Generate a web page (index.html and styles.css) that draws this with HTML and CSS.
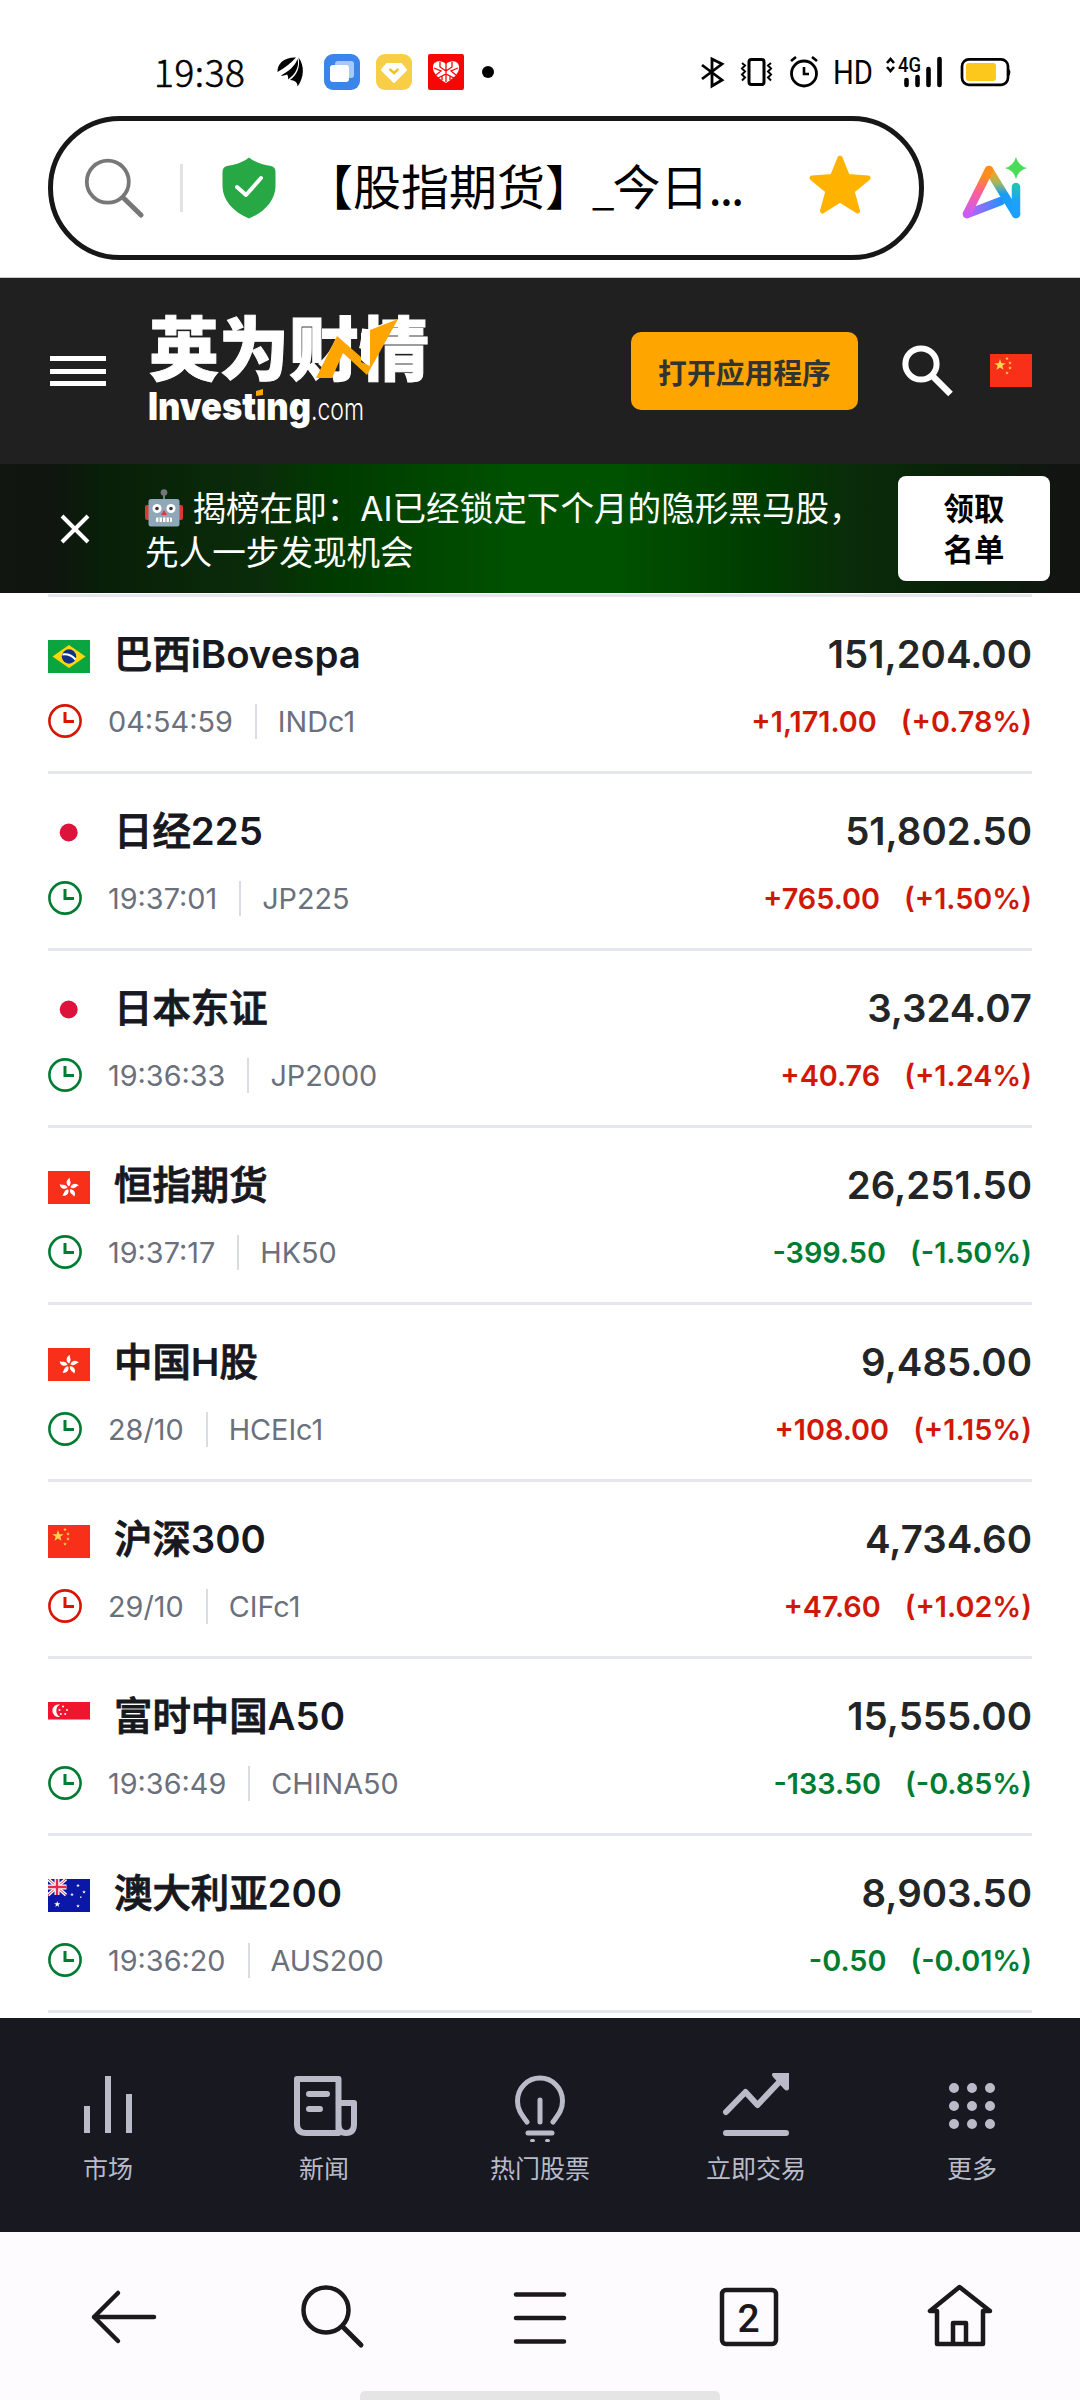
FILE: index.html
```
<!DOCTYPE html>
<html lang="zh-CN">
	<head>
		<meta charset="utf-8">
		<title>股指期货</title>
		<link rel="stylesheet" href="styles.css">
	</head>
	<body>
		<!-- shared shapes -->
		<svg class="defs" width="0" height="0">
			<symbol id="clock" viewBox="0 0 34 34">
				<circle cx="17" cy="17" r="15.6" fill="none" stroke="currentColor" stroke-width="2.6"/>
				<path d="M17 8v9.5h9" fill="none" stroke="currentColor" stroke-width="3"/>
			</symbol>
			<symbol id="star" viewBox="-10 -10 20 20">
				<path d="M0-10 2.4-3.1 9.5-3.1 3.8 1.2 5.9 8.1 0 4-5.9 8.1-3.8 1.2-9.5-3.1-2.4-3.1z" fill="currentColor"/>
			</symbol>
			<symbol id="flag-cn" viewBox="0 0 42 33">
				<path d="M0 0h42v33H0z" fill="#f93019"/>
				<g color="#ffd850">
					<use href="#star" x="4" y="5" width="12" height="12"/>
					<use href="#star" x="15" y="2.500" width="4" height="4"/>
					<use href="#star" x="18" y="7" width="4" height="4"/>
					<use href="#star" x="18" y="12" width="4" height="4"/>
					<use href="#star" x="15" y="17" width="4" height="4"/>
				</g>
			</symbol>
			<symbol id="flag-br" viewBox="0 0 42 33">
				<path d="M0 0h42v33H0z" fill="#0ba540"/>
				<path d="M21 5 37.500 16.500 21 28 4.500 16.500z" fill="#fbd80b"/>
				<circle cx="21" cy="16.500" r="7.200" fill="#10308c"/>
				<path d="M14.500 14.500Q22 13.500 27.500 19.500" fill="none" stroke="#fff" stroke-width="2"/>
			</symbol>
			<symbol id="flag-jp" viewBox="0 0 42 33">
				<circle cx="20.700" cy="15.500" r="9" fill="#dc143c"/>
			</symbol>
			<symbol id="flag-hk" viewBox="0 0 42 33">
				<path d="M0 0h42v33H0z" fill="#f93019"/>
				<g fill="#fff" transform="translate(21 17)">
					<path id="petal" d="M0-1.500C-4-4-2.500-9 1-10 0-7.500 3.500-5.500 0-1.500z"/>
					<use href="#petal" transform="rotate(72)"/>
					<use href="#petal" transform="rotate(144)"/>
					<use href="#petal" transform="rotate(216)"/>
					<use href="#petal" transform="rotate(288)"/>
				</g>
			</symbol>
			<symbol id="flag-sg" viewBox="0 0 42 33">
				<path d="M0 0h42v17.500H0z" fill="#f0142f"/>
				<path d="M12 2.600A6.300 6.300 0 1 0 12 14.900 7 7 0 0 1 12 2.600z" fill="#fff"/>
				<g fill="#fff">
					<circle cx="15" cy="4.500" r="1"/><circle cx="11.500" cy="8" r="1"/><circle cx="19" cy="8" r="1"/>
					<circle cx="12.800" cy="12" r="1"/><circle cx="17.200" cy="12" r="1"/>
				</g>
			</symbol>
			<symbol id="flag-au" viewBox="0 0 42 33">
				<path d="M0 0h42v33H0z" fill="#0a17a7"/>
				<path d="M0 0 18 16M18 0 0 16" stroke="#fff" stroke-width="3.400"/>
				<path d="M0 0 18 16M18 0 0 16" stroke="#e0304a" stroke-width="1"/>
				<path d="M9 0v16M0 8h18.500" stroke="#fff" stroke-width="5"/>
				<path d="M9 0v16M0 8h18.500" stroke="#e8284a" stroke-width="2.400"/>
				<g color="#fff">
					<use href="#star" x="6" y="22" width="6.500" height="6.500"/>
					<use href="#star" x="28" y="4.500" width="4" height="4"/>
					<use href="#star" x="34" y="11" width="4" height="4"/>
					<use href="#star" x="22" y="13.500" width="4" height="4"/>
					<use href="#star" x="28" y="25" width="4" height="4"/>
					<use href="#star" x="31.500" y="17" width="2.500" height="2.500"/>
				</g>
			</symbol>
		</svg>

		<div class="status">
			<span class="time">19:38</span>
			<svg class="apps" width="220" height="40" viewBox="274 52 220 40">
				<path d="M277.500 72C277 64 284 57 296 57.500 291 63 285 68 277.500 72z"/>
				<path d="M281 75.500C289 71 295 66 297.500 59 299.500 66 296 74 288 79.500 288.500 77 288 76 287 74.500 285 75.500 283 76 281 75.500z"/>
				<path d="M290 80C297 75 300.500 67 298.500 57.500 305 66 304 78 297.500 86.500 297.500 83 296 80.500 290 80z"/>
				<rect x="324" y="54" width="36" height="36" rx="9" fill="#3985ea"/>
				<rect x="335" y="61" width="19" height="17" rx="3" fill="#a9caf8"/>
				<rect x="330" y="65" width="19" height="17" rx="3" fill="#fff"/>
				<rect x="376" y="54" width="36" height="36" rx="9" fill="#f7ce46"/>
				<path d="M387 64h14l5 6-12 12-12-12z" fill="#fff" stroke="#fff" stroke-width="2" stroke-linejoin="round"/>
				<path d="m389.500 69 4.500 4 4.500-4" fill="none" stroke="#f2c030" stroke-width="2.500"/>
				<rect x="428" y="54" width="36" height="36" rx="2" fill="#f80505"/>
				<path d="M446 83C440 79 432 74 433 66 434 60 442 60 446 64 450 60 458 60 459 66 460 74 452 79 446 83z" fill="#fff"/>
				<path d="M446 63v19M434 68l7 3-5 4M458 68l-7 3 5 4M440 62v5l6 4 6-4v-5M438 78l8-4 8 4M442 76v4M450 76v4" fill="none" stroke="#f80505" stroke-width="1.300"/>
				<circle cx="488" cy="72" r="6"/>
			</svg>
			<svg class="sys" width="316" height="40" viewBox="698 52 316 40">
				<path d="m702 65 20 15-10 6V59l10 5-20 15" fill="none" stroke="#000" stroke-width="2.800"/>
				<rect x="749" y="59.500" width="15" height="25" rx="2.500" fill="none" stroke="#000" stroke-width="3"/>
				<path d="m742 63 3 2.500-3 3 3 3-3 3 3 3-3 3M771 63l-3 2.500 3 3-3 3 3 3-3 3 3 3" fill="none" stroke="#000" stroke-width="2"/>
				<circle cx="804" cy="73.500" r="12.500" fill="none" stroke="#000" stroke-width="2.800"/>
				<path d="M804 67v7h5M791 61l5-4M817 61l-5-4" fill="none" stroke="#000" stroke-width="2.600"/>
				<text x="833" y="84" class="hd" textLength="40" lengthAdjust="spacingAndGlyphs">HD</text>
				<path d="m887 63 3.500-4 3.500 4M887 67l3.500 4 3.500-4" fill="none" stroke="#000" stroke-width="2.600"/>
				<text x="898" y="72" class="net" textLength="23" lengthAdjust="spacingAndGlyphs">4G</text>
				<path d="M906.500 80v5M917.500 77v8M928.500 69v16M939.500 59v26" stroke="#000" stroke-width="4.600" stroke-linecap="round"/>
				<rect x="962" y="59.300" width="46" height="25.500" rx="7" fill="none" stroke="#000" stroke-width="2.700"/>
				<rect x="966" y="63" width="30" height="18" rx="3" fill="#fcc81c"/>
				<path d="M1008 68q5 4 0 9z"/>
			</svg>
		</div>

		<div class="address">
			<div class="pill">
				<svg class="find" width="60" height="62" viewBox="84 157 60 62" fill="none" stroke="#777" stroke-linecap="round">
					<circle cx="107.800" cy="181.700" r="21" stroke-width="3.800"/>
					<path d="m123.500 198 17.500 17" stroke-width="5"/>
				</svg>
				<i class="bar"></i>
				<svg class="shield" width="54" height="62" viewBox="0 0 54 62">
					<path d="M27 .5C34 6 42 8 49 9Q53.500 10 53.500 15V30C53 43 43 55 27 61.500 11 55 1 43 .5 30V15Q.5 10 5 9C12 8 20 6 27 .500z" fill="#28a745"/>
					<path d="m15 30 9 8 15-17" fill="none" stroke="#fff" stroke-width="4" stroke-linecap="round" stroke-linejoin="round"/>
				</svg>
				<span class="title">【股指期货】<span class="tail">_</span>今日<span class="dots">...</span></span>
				<svg class="fav" width="64" height="62" viewBox="0 0 64 62">
					<path d="M32 4 39.500 22.500 60 24 44 37 49.500 57 32 46 14.500 57 20 37 4 24 24.500 22.500z" fill="#ffb300" stroke="#ffb300" stroke-width="5" stroke-linejoin="round"/>
				</svg>
			</div>
			<svg class="ai" width="68" height="66" viewBox="960 155 68 66">
				<defs>
					<linearGradient id="g1" x1="0" y1="1" x2="0" y2="0">
						<stop offset="0" stop-color="#c95cf8"/><stop offset=".5" stop-color="#fa5f96"/><stop offset=".85" stop-color="#ff8d1e"/>
					</linearGradient>
					<linearGradient id="g2" x1="0" y1="0" x2="0" y2="1">
						<stop offset="0" stop-color="#ffa01e"/><stop offset=".3" stop-color="#a0b860"/><stop offset=".55" stop-color="#169cf5"/><stop offset="1" stop-color="#1da0ff"/>
					</linearGradient>
					<linearGradient id="g3" x1="0" y1="0" x2="1" y2="0">
						<stop offset="0" stop-color="#c95cf8"/><stop offset="1" stop-color="#2590ff"/>
					</linearGradient>
					<linearGradient id="g4" x1="0" y1="183" x2="0" y2="215" gradientUnits="userSpaceOnUse">
						<stop offset="0" stop-color="#1fc9a8"/><stop offset=".6" stop-color="#1d9ffc"/>
					</linearGradient>
				</defs>
				<g fill="none" stroke-width="8.500" stroke-linecap="round">
					<path d="M967 214 1001 201" stroke="url(#g3)"/>
					<path d="m989 170 27 44" stroke="url(#g2)"/>
					<path d="m967 214 22-44" stroke="url(#g1)"/>
					<path d="M1016 187v27" stroke="url(#g4)"/>
				</g>
				<path d="M1016 157q2.500 9 11 11-8.500 2-11 11-2.500-9-11-11 8.500-2 11-11z" fill="#48dc58"/>
			</svg>
		</div>

		<header class="top">
			<div class="burger"><i></i><i></i><i></i></div>
			<svg class="logo" width="284" height="124" viewBox="146 309 284 124">
				<text x="149" y="374.500" class="logo-cn" textLength="280" lengthAdjust="spacingAndGlyphs">英为财情</text>
				<path d="M361 333 370 329V368L361 360z" fill="#fff"/>
				<path d="M316 378 337 336 361 357V362L370 366V330L398 319 367 375 343 353 332 378z" fill="#ffa500"/>
				<text x="148" y="419.500" class="logo-en" textLength="163" lengthAdjust="spacingAndGlyphs">Investing</text>
				<path d="M255 387h10v11h-10z" fill="#212020"/>
				<path d="m256 391 7-2v6l-7 1z" fill="#ffa500"/>
				<text x="311" y="419.500" class="logo-com" textLength="53" lengthAdjust="spacingAndGlyphs">.com</text>
			</svg>
			<button class="open-app">打开应用程序</button>
			<svg class="top-search" width="52" height="52" viewBox="0 0 52 52" fill="none" stroke="#fff">
				<circle cx="19" cy="19" r="15.600" stroke-width="6"/>
				<path d="m30.500 31 18 18" stroke-width="6.500"/>
			</svg>
			<svg class="flag"><use href="#flag-cn"/></svg>
		</header>

		<div class="promo">
			<svg class="close" width="30" height="30" viewBox="0 0 30 30"><path d="m2 2 26 26M28 2 2 28" stroke="#fff" stroke-width="4"/></svg>
			<p>
				<svg class="robot" width="38" height="38" viewBox="0 0 38 38">
					<path d="M19 3v8" stroke="#6d8290" stroke-width="2"/>
					<circle cx="19" cy="3.500" r="3.300" fill="#73777a"/>
					<rect x="0" y="16" width="5" height="15" rx="2" fill="#d53a35"/>
					<rect x="33" y="16" width="5" height="15" rx="2" fill="#d53a35"/>
					<rect x="3.500" y="10" width="31" height="27.500" rx="2.500" fill="#8fa8b8"/>
					<circle cx="12" cy="19.500" r="4.500" fill="#fff"/><circle cx="26" cy="19.500" r="4.500" fill="#fff"/>
					<circle cx="12" cy="19.500" r="1.800" fill="#333"/><circle cx="26" cy="19.500" r="1.800" fill="#333"/>
					<path d="m19 21 3 5h-6z" fill="#e0353a"/>
					<rect x="11" y="28.500" width="16" height="4.500" rx="1" fill="#fff"/>
					<path d="M14 28.500V33M17.500 28.500V33M21 28.500V33M24.500 28.500V33" stroke="#777" stroke-width=".8"/>
				</svg>
				揭榜在即：AI已经锁定下个月的隐形黑马股，<br>先人一步发现机会
			</p>
			<button>领取<br>名单</button>
		</div>

		<main class="quotes">
			<div class="row up closed">
				<div class="line"><svg class="flag"><use href="#flag-br"/></svg><b class="name">巴西<span>iBovespa</span></b><b class="price">151,204.00</b></div>
				<div class="line sub"><svg class="clock"><use href="#clock"/></svg><span class="at">04:54:59</span><span class="sym">INDc1</span><span class="chg">+1,171.00</span><span class="pct">(+0.78%)</span></div>
			</div>
			<div class="row up">
				<div class="line"><svg class="flag"><use href="#flag-jp"/></svg><b class="name">日经<span>225</span></b><b class="price">51,802.50</b></div>
				<div class="line sub"><svg class="clock"><use href="#clock"/></svg><span class="at">19:37:01</span><span class="sym">JP225</span><span class="chg">+765.00</span><span class="pct">(+1.50%)</span></div>
			</div>
			<div class="row up">
				<div class="line"><svg class="flag"><use href="#flag-jp"/></svg><b class="name">日本东证</b><b class="price">3,324.07</b></div>
				<div class="line sub"><svg class="clock"><use href="#clock"/></svg><span class="at">19:36:33</span><span class="sym">JP2000</span><span class="chg">+40.76</span><span class="pct">(+1.24%)</span></div>
			</div>
			<div class="row down">
				<div class="line"><svg class="flag"><use href="#flag-hk"/></svg><b class="name">恒指期货</b><b class="price">26,251.50</b></div>
				<div class="line sub"><svg class="clock"><use href="#clock"/></svg><span class="at">19:37:17</span><span class="sym">HK50</span><span class="chg">-399.50</span><span class="pct">(-1.50%)</span></div>
			</div>
			<div class="row up">
				<div class="line"><svg class="flag"><use href="#flag-hk"/></svg><b class="name">中国<span>H</span>股</b><b class="price">9,485.00</b></div>
				<div class="line sub"><svg class="clock"><use href="#clock"/></svg><span class="at">28/10</span><span class="sym">HCEIc1</span><span class="chg">+108.00</span><span class="pct">(+1.15%)</span></div>
			</div>
			<div class="row up closed">
				<div class="line"><svg class="flag"><use href="#flag-cn"/></svg><b class="name">沪深<span>300</span></b><b class="price">4,734.60</b></div>
				<div class="line sub"><svg class="clock"><use href="#clock"/></svg><span class="at">29/10</span><span class="sym">CIFc1</span><span class="chg">+47.60</span><span class="pct">(+1.02%)</span></div>
			</div>
			<div class="row down">
				<div class="line"><svg class="flag"><use href="#flag-sg"/></svg><b class="name">富时中国<span>A50</span></b><b class="price">15,555.00</b></div>
				<div class="line sub"><svg class="clock"><use href="#clock"/></svg><span class="at">19:36:49</span><span class="sym">CHINA50</span><span class="chg">-133.50</span><span class="pct">(-0.85%)</span></div>
			</div>
			<div class="row down">
				<div class="line"><svg class="flag"><use href="#flag-au"/></svg><b class="name">澳大利亚<span>200</span></b><b class="price">8,903.50</b></div>
				<div class="line sub"><svg class="clock"><use href="#clock"/></svg><span class="at">19:36:20</span><span class="sym">AUS200</span><span class="chg">-0.50</span><span class="pct">(-0.01%)</span></div>
			</div>
		</main>

		<nav class="tabs">
			<a>
				<svg viewBox="-36 0 72 72"><path d="M-21 38v27M0 8v57M21 26v39" stroke="currentColor" stroke-width="6"/></svg>
				市场
			</a>
			<a>
				<svg viewBox="-36 0 72 72" fill="none" stroke="currentColor" stroke-width="6" stroke-linejoin="round">
					<path d="M-27 11H14.500V65H-18Q-27 65-27 56zM14.500 35H30V56Q30 65 22 65 14.500 65 14.500 56"/>
					<path d="M-15 26H3M-15 41H-4" stroke-linecap="round"/>
				</svg>
				新闻
			</a>
			<a>
				<svg viewBox="-36 0 72 72" fill="none" stroke="currentColor" stroke-width="5" stroke-linecap="round">
					<path d="M-13 54C-18 47-22.500 42-22.500 33A22.500 23 0 0 1 22.500 33C22.500 42 18 47 13 54M0 32V54M-12 65H12"/>
					<path d="M-8.500 72.500h2M6.500 72.500h2" stroke-width="3"/>
				</svg>
				热门股票
			</a>
			<a>
				<svg viewBox="-36 0 72 72">
					<path d="m-30 44 19.500-20L1.500 37 27 10M-30 65H30" fill="none" stroke="currentColor" stroke-width="6" stroke-linecap="round" stroke-linejoin="round"/>
					<path d="M17 5H33V21Q31 24 28 21L17 9Q15 6 17 5z" fill="currentColor"/>
				</svg>
				立即交易
			</a>
			<a>
				<svg viewBox="-36 0 72 72" stroke="currentColor" stroke-width="10" stroke-linecap="round"><path d="M-18 20h0M0 20h0M18 20h0M-18 38h0M0 38h0M18 38h0M-18 56h0M0 56h0M18 56h0"/></svg>
				更多
			</a>
		</nav>

		<footer class="browser">
			<svg width="1080" height="100" viewBox="0 2268 1080 100" fill="none" stroke="#1c191b" stroke-width="4.500" stroke-linecap="round" stroke-linejoin="round">
				<path d="m118 2293-24 24 24 24M94 2317h60"/>
				<circle cx="326" cy="2310" r="22.500"/>
				<path d="m343 2327 18 18" stroke-width="5"/>
				<path d="M516 2294.500h48M516 2318h48M516 2341.500h48"/>
				<rect x="722" y="2290" width="54" height="54" rx="4"/>
				<text x="748.500" y="2332" class="count">2</text>
				<path d="M959.500 2287 930 2311h7V2344h46V2311h7zM953 2344V2323h13V2344"/>
			</svg>
			<i class="handle"></i>
		</footer>
	</body>
</html>
```
FILE: styles.css
```
* {
	box-sizing: border-box;
}

body {
	margin: 0;
	width: 1080px;
	height: 2400px;
	overflow: hidden;
	background: #fff;
	font-family: Inter, "Noto Sans CJK SC", sans-serif;
	color: #181820;
}

svg {
	display: block;
	flex: none;
}

button {
	border: 0;
	padding: 0;
	font-family: inherit;
}

.defs {
	position: absolute;
}

/* phone status bar */
.status {
	display: flex;
	align-items: center;
	height: 116px;
	padding: 28px 66px 0 154px;
}

.time {
	width: 120px;
	padding-bottom: 3px;
	font: 300 37px/40px "Noto Sans CJK SC", sans-serif;
	-webkit-text-stroke: 0.6px #000;
	letter-spacing: 0.6px;
	color: #000;
}

.sys {
	margin-left: auto;
}

.hd {
	font: 34px Roboto, sans-serif;
}

.net {
	font: 500 20px Roboto, sans-serif;
}

/* address bar */
.address {
	display: flex;
	align-items: center;
	height: 162px;
	padding: 0 52px 18px 48px;
	border-bottom: 1px solid #c8c8cc;
}

.pill {
	display: flex;
	align-items: center;
	width: 876px;
	height: 144px;
	padding: 0 47px 0 31px;
	border: 5px solid #171717;
	border-radius: 72px;
}

.bar {
	width: 3px;
	height: 48px;
	margin: 0 39px 0 36px;
	background: #e2e2e2;
}

.title {
	margin-left: 29px;
	padding-bottom: 4px;
	font: 48px/60px "Noto Sans CJK SC", sans-serif;
	color: #000;
	white-space: nowrap;
}

.tail {
	margin: 0 -2px 0 -1px;
	font-size: 40px;
}

.dots {
	letter-spacing: -2px;
}

.fav {
	margin: 0 0 6px auto;
}

.ai {
	margin-left: auto;
}

/* site header */
.top {
	display: flex;
	align-items: center;
	height: 186px;
	padding: 0 48px 0 50px;
	background: #212020;
}

.burger {
	display: flex;
	flex-direction: column;
	gap: 7.5px;
	width: 56px;
	margin-right: 40px;
}

.burger i {
	height: 5px;
	background: #fff;
}

.logo {
	overflow: visible;
}

.logo-cn {
	font: 900 69px "Noto Sans CJK SC", sans-serif;
	fill: #fff;
	stroke: #fff;
	stroke-width: 1px;
}

.logo-en {
	font: 900 39px Inter, sans-serif;
	fill: #fff;
}

.logo-com {
	font: 300 30px Inter, sans-serif;
	fill: #fff;
}

.open-app {
	width: 227px;
	height: 78px;
	margin: 0 44px 0 auto;
	border-radius: 10px;
	background: #ffa500;
	font-size: 28.8px;
	font-weight: 700;
	color: #333;
}

.top-search {
	margin-right: 36px;
}

.flag {
	width: 42px;
	height: 33px;
}

.top .flag {
	margin-bottom: 2px;
}

/* promo strip */
.promo {
	display: flex;
	align-items: center;
	height: 129px;
	padding: 0 30px 0 60px;
	background: linear-gradient(90deg, #111611 0, #10150f 50px, #081f08 100px, #0a2c0a 260px, #003a00 330px, #005200 520px, #005200 610px, #003a00 770px, #0a2c0a 850px, #082008 970px, #121412 1060px);
}

.promo p {
	margin: 5px 0 0 55px;
	font-size: 33.6px;
	line-height: 44px;
	color: #fff;
	white-space: nowrap;
}

.robot {
	display: inline-block;
	vertical-align: -6px;
}

.promo button {
	width: 152px;
	height: 105px;
	padding-top: 3px;
	margin-left: auto;
	border-radius: 8px;
	background: #fff;
	font-size: 30.4px;
	font-weight: 700;
	line-height: 41px;
	color: #000;
}

/* quotes list */
.quotes {
	height: 1425px;
	padding: 1px 48px 0;
}

.row {
	height: 177px;
	padding-top: 27px;
	border-top: 3px solid #e6e6ef;
}

.row:last-child {
	height: 180px;
	border-bottom: 3px solid #e6e6ef;
}

.line {
	display: flex;
	align-items: center;
	height: 60px;
	font-size: 38.4px;
}

.line .flag {
	margin: 5px 24px 0 0;
}

.name,
.price {
	font-weight: 600;
	line-height: 60px;
}

/* medium Chinese, latin part stays semibold */
.name {
	font-weight: 500;
	-webkit-text-stroke: 0.9px #181820;
}

.name span {
	font-weight: 600;
	-webkit-text-stroke: 0;
}

.price {
	margin-left: auto;
	color: #232526;
}

.sub {
	height: 40px;
	margin-top: 17px;
	font-size: 28.8px;
	line-height: 40px;
	color: #6a707c;
}

.clock {
	width: 34px;
	height: 34px;
	margin: 0 26px 1px 0;
	color: #007c32;
}

.closed .clock {
	color: #d91400;
}

.at,
.sym,
.chg,
.pct {
	padding-top: 1px;
}

.sym {
	margin-left: 22px;
	padding-left: 21px;
	border-left: 2px solid #d9dce3;
	line-height: 34px;
}

.chg {
	margin-left: auto;
	margin-right: 24px;
}

.chg,
.pct {
	font-weight: 600;
}

.up .chg,
.up .pct {
	color: #d01807;
}

.down .chg,
.down .pct {
	color: #007c32;
}

/* site tabs */
.tabs {
	display: flex;
	height: 214px;
	padding-top: 50px;
	background: #181821;
	color: #b9bbc8;
}

.tabs a {
	flex: 1;
	display: flex;
	flex-direction: column;
	align-items: center;
	font-size: 25px;
	line-height: 36px;
}

.tabs svg {
	width: 72px;
	height: 72px;
	margin-bottom: 11px;
	overflow: visible;
}

/* browser toolbar */
.browser {
	display: flex;
	flex-direction: column;
	align-items: center;
	justify-content: space-between;
	height: 168px;
	padding-top: 36px;
	background: #fefbff;
}

.count {
	font: 500 39px Roboto, sans-serif;
	fill: #1c191b;
	stroke: none;
	text-anchor: middle;
}

.handle {
	width: 360px;
	height: 9px;
	border-radius: 5px 5px 0 0;
	background: #e5e5e5;
}
```
